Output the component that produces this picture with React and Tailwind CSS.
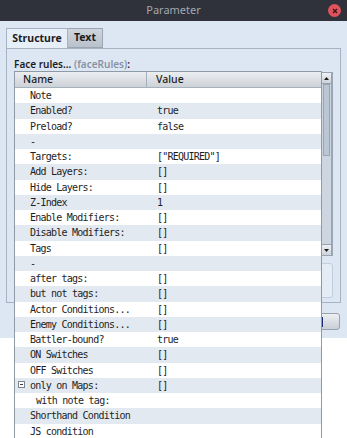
import React from "react";

const rows = [
  { name: "Note", value: "" },
  { name: "Enabled?", value: "true" },
  { name: "Preload?", value: "false" },
  { name: "-", value: "" },
  { name: "Targets:", value: '["REQUIRED"]' },
  { name: "Add Layers:", value: "[]" },
  { name: "Hide Layers:", value: "[]" },
  { name: "Z-Index", value: "1" },
  { name: "Enable Modifiers:", value: "[]" },
  { name: "Disable Modifiers:", value: "[]" },
  { name: "Tags", value: "[]" },
  { name: "-", value: "" },
  { name: "after tags:", value: "[]" },
  { name: "but not tags:", value: "[]" },
  { name: "Actor Conditions...", value: "[]" },
  { name: "Enemy Conditions...", value: "[]" },
  { name: "Battler-bound?", value: "true" },
  { name: "ON Switches", value: "[]" },
  { name: "OFF Switches", value: "[]" },
  { name: "only on Maps:", value: "[]", toggle: true },
  { name: "with note tag:", value: "", indent: true },
  { name: "Shorthand Condition", value: "" },
  { name: "JS condition", value: "" },
];

const sans = { fontFamily: '"Noto Sans", "DejaVu Sans", sans-serif' };
const mono = { fontFamily: '"DejaVu Sans Mono", "Liberation Mono", monospace' };

const Arrow = ({ down }) => (
  <div className="h-[12px] border border-[#98a4b2] bg-gradient-to-b from-[#eef1f4] to-[#cdd3da] flex items-center justify-center">
    <svg width="5" height="3" viewBox="0 0 5 3">
      <path d={down ? "M0 0h5L2.5 3z" : "M0 3h5L2.5 0z"} fill="#1b1b1b" />
    </svg>
  </div>
);

const App = () => {
  return (
    <div className="relative w-[347px] h-[438px] overflow-hidden bg-white" style={sans}>
      {/* title bar */}
      <div className="h-[21px] bg-[#2f323a] flex items-center justify-center relative">
        <span className="text-[11px] text-[#a3a7b0]">Parameter</span>
        <div className="absolute right-[6px] top-[4px] w-[13px] h-[13px] rounded-full bg-[#e0525c] flex items-center justify-center">
          <svg width="6" height="6" viewBox="0 0 6 6">
            <path d="M1 1l4 4M5 1L1 5" stroke="#3a1418" strokeWidth="1.4" />
          </svg>
        </div>
      </div>

      {/* dialog body */}
      <div className="h-[317px] bg-[#dde7f3] pt-[7px] px-[6px]">
        <div className="flex h-[20px]">
          <div className="w-[62px] border border-b-0 border-[#a6b3c3] bg-[#e6eef8] flex items-center justify-center text-[10.5px] font-bold text-[#1d1d1d]">
            Structure
          </div>
          <div className="w-[35px] border border-l-0 border-[#9aa6b5] bg-gradient-to-b from-[#cfd5dc] to-[#b9c1cb] flex items-center justify-center text-[10.5px] font-bold text-[#1d1d1d]">
            Text
          </div>
        </div>
        <div className="h-[255px] w-[335px] border border-[#a6b3c3] pl-[7px] pr-[7px] pt-[9px]">
          <div className="text-[10px] font-semibold text-[#1d1d1d] leading-[13px]">
            Face rules... <span className="text-[#8793a5]">(faceRules)</span>:
          </div>
          <div className="mt-[1px] h-[184px] flex justify-end">
            <div className="w-[12px] flex flex-col border-r border-[#9aa6b4]">
              <Arrow />
              <div className="flex-1 bg-[#cdd6e0] border-x border-[#9aa6b4] flex flex-col">
                <div className="h-[72px] mx-[1px] bg-[#bac6d3] border border-[#9aa6b4]" />
              </div>
              <Arrow down />
            </div>
          </div>
          <div className="mt-[7px] h-[35px] border border-[#c2cedb] rounded-[3px] bg-[#e4ecf6]" />
        </div>
        <div className="flex justify-end mt-[10px]">
          <div className="w-[21px] h-[17px] mr-[1px] rounded-[3px] border border-[#98a3b0] bg-gradient-to-b from-[#eef0f3] to-[#c9ced5] flex items-center">
            <div className="ml-[1px] w-[2px] h-[10px] bg-[#1b2f7a]" />
          </div>
        </div>
      </div>

      {/* popup list */}
      <div className="absolute left-[14px] top-[71px] w-[308px] h-[367px] border border-[#8f9aa7] bg-white">
        <div className="h-[16px] flex border-b border-[#a7b1bd] bg-gradient-to-b from-[#eceef1] to-[#cdd2d8] text-[10.5px] font-medium text-[#1d1d1d]">
          <div className="w-[132px] border-r border-[#a7b1bd] pl-[8px] flex items-center">Name</div>
          <div className="pl-[9px] flex items-center">Value</div>
        </div>
        {rows.map((r, i) => (
          <div
            key={i}
            className={`h-[15.25px] flex items-center text-[10px] tracking-[-0.76px] text-[#1e1e1e] ${i % 2 === 1 ? "bg-[#e3e9f1]" : "bg-white"}`}
            style={mono}
          >
            <div className={`w-[132px] relative ${r.indent ? "pl-[21px]" : "pl-[15px]"}`}>
              {r.toggle && (
                <div className="absolute left-[3px] top-[3px] w-[7px] h-[7px] border border-[#7c8692] bg-white flex items-center justify-center">
                  <div className="w-[3px] h-[1px] bg-[#3b3b3b]" />
                </div>
              )}
              {r.name}
            </div>
            <div className="pl-[10px]">{r.value}</div>
          </div>
        ))}
      </div>
    </div>
  );
};

export default App;
